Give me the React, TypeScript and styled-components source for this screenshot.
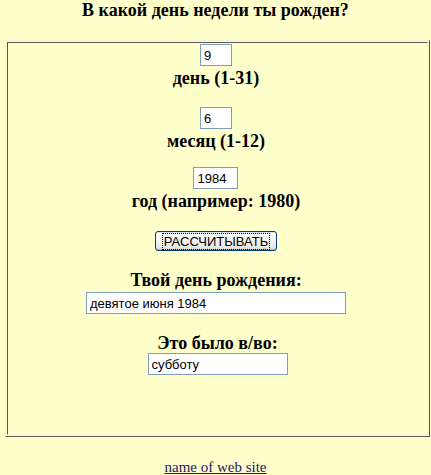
import React from 'react'
import styled, { createGlobalStyle } from 'styled-components'

const GlobalStyle = createGlobalStyle`
    html, body {
        margin: 0;
        padding: 0;
        background: #ffffcc;
    }
    body {
        font-family: "Liberation Serif", "Times New Roman", serif;
        color: #000;
    }
`;

const Page = styled.div`
    width: 431px;
    display: flex;
    flex-direction: column;
    align-items: center;
`;

const Title = styled.h1`
    margin: 0;
    font-size: 18px;
    line-height: 21px;
    font-weight: 700;
    text-align: center;
`;

const Frame = styled.div`
    margin-top: 19px;
    align-self: flex-start;
    margin-left: 5px;
    width: 425px;
    height: 397px;
    box-sizing: border-box;
    border: 1px solid;
    border-color: #f2f2d8 #5a5a4a #5a5a4a #f2f2d8;
    padding: 1px;
    display: flex;
`;

const Cell = styled.div`
    flex: 1;
    border: 1px solid;
    border-color: #5a5a4a #f2f2d8 #f2f2d8 #5a5a4a;
    padding-right: 3px;
    display: flex;
    flex-direction: column;
    align-items: center;
`;

const Field = styled.div<{ $gap?: number; $shift?: number }>`
    display: flex;
    flex-direction: column;
    align-items: center;
    margin-top: ${({ $gap }) => $gap ?? 0}px;
    margin-left: ${({ $shift }) => $shift ?? 0}px;
`;

const TextBox = styled.input<{ $w: number }>`
    width: ${({ $w }) => $w}px;
    height: 22px;
    box-sizing: border-box;
    border: 1px solid #7f9db9;
    background: #fff;
    padding: 1px 3px;
    margin: 0;
    font-family: "Liberation Sans", Arial, sans-serif;
    font-size: 13px;
    color: #000;
    outline: none;
`;

const Label = styled.div`
    font-size: 18px;
    font-weight: 700;
    line-height: 21px;
    margin-top: 2px;
`;

const Heading = styled(Label)<{ $after?: number }>`
    margin-top: 0;
    margin-bottom: ${({ $after }) => $after ?? 1}px;
`;

const CalcButton = styled.button`
    margin-top: 19px;
    width: 122px;
    height: 20px;
    box-sizing: border-box;
    padding: 0;
    border: 1px solid #003c74;
    border-radius: 3px;
    background: linear-gradient(#ffffff, #ecebe6 80%, #d6d0c5);
    box-shadow: inset 0 -1px 0 #a4bde8, inset 0 1px 0 #cee7ff;
    font-family: "Liberation Sans", Arial, sans-serif;
    font-size: 13px;
    color: #000;
    span {
        outline: 1px dotted #000;
        padding: 0 1px;
    }
`;

const Footer = styled.a`
    margin-top: 22px;
    font-size: 15px;
    color: #1a1a6e;
    text-decoration: underline;
`;

export default function App() {
    return (
        <Page>
            <GlobalStyle />
            <Title>В какой день недели ты рожден?</Title>
            <Frame>
                <Cell>
                    <Field $gap={1}>
                        <TextBox $w={32} defaultValue="9" />
                        <Label>день (1-31)</Label>
                    </Field>
                    <Field $gap={18}>
                        <TextBox $w={32} defaultValue="6" />
                        <Label>месяц (1-12)</Label>
                    </Field>
                    <Field $gap={15}>
                        <TextBox $w={45} defaultValue="1984" />
                        <Label>год (например: 1980)</Label>
                    </Field>
                    <CalcButton><span>РАССЧИТЫВАТЬ</span></CalcButton>
                    <Field $gap={19}>
                        <Heading>Твой день рождения:</Heading>
                        <TextBox $w={260} defaultValue="девятое июня 1984" />
                    </Field>
                    <Field $gap={19} $shift={3}>
                        <Heading $after={-1}>Это было в/во:</Heading>
                        <TextBox $w={140} defaultValue="субботу" />
                    </Field>
                </Cell>
            </Frame>
            <Footer href="#">name of web site</Footer>
        </Page>
    )
}
